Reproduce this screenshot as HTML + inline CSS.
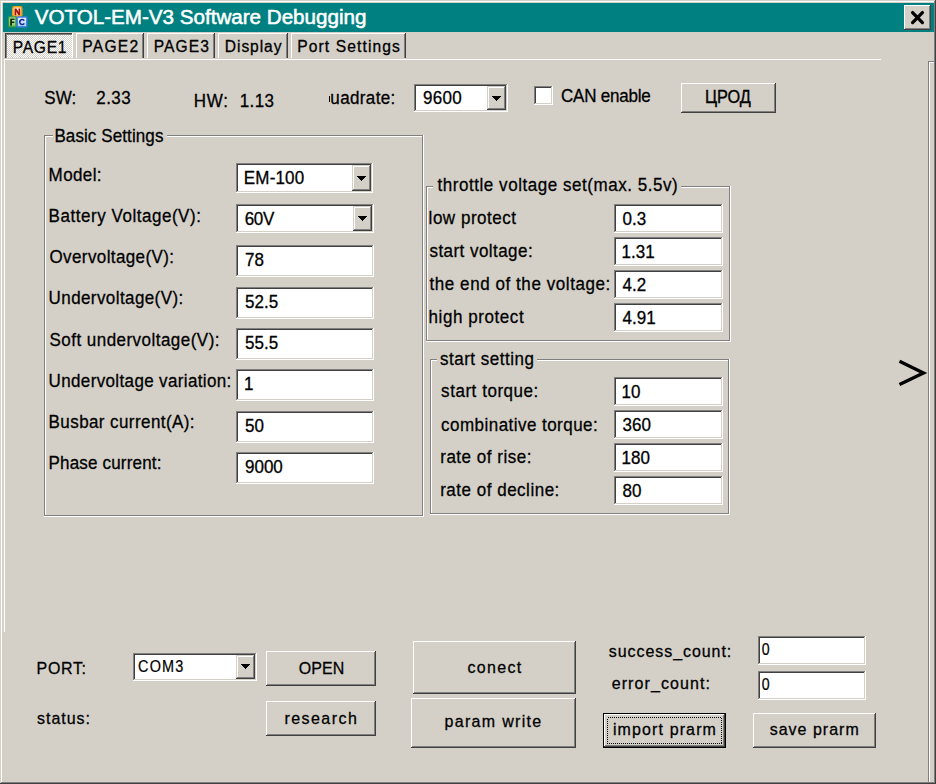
<!DOCTYPE html>
<html><head><meta charset="utf-8"><title>VOTOL-EM-V3 Software Debugging</title>
<style>html,body{margin:0;padding:0;background:#d4d0c8;overflow:hidden}svg{display:block}text{font-family:"Liberation Sans",sans-serif;white-space:pre}</style></head>
<body><svg width="936" height="784" viewBox="0 0 936 784">
<g shape-rendering="crispEdges"><rect x="0" y="0" width="936" height="784" fill="#d4d0c8"/><rect x="1" y="1" width="933" height="1" fill="#ffffff"/><rect x="1" y="1" width="1" height="781" fill="#ffffff"/><rect x="935" y="0" width="1" height="784" fill="#404040"/><rect x="934" y="1" width="1" height="782" fill="#808080"/><rect x="0" y="783" width="936" height="1" fill="#404040"/><rect x="1" y="782" width="934" height="1" fill="#808080"/><rect x="3" y="3" width="931" height="29" fill="#008080"/><defs><linearGradient id="gN" x1="0" y1="0" x2="0" y2="1"><stop offset="0" stop-color="#fff4e0"/><stop offset="1" stop-color="#f6c27a"/></linearGradient><linearGradient id="gF" x1="0" y1="0" x2="0" y2="1"><stop offset="0" stop-color="#e0f4c8"/><stop offset="1" stop-color="#7cc05a"/></linearGradient><linearGradient id="gC" x1="0" y1="0" x2="0" y2="1"><stop offset="0" stop-color="#eef4ff"/><stop offset="1" stop-color="#a8c8f4"/></linearGradient></defs><g shape-rendering="geometricPrecision"><rect x="12.8" y="6.8" width="9" height="9.6" rx="1.6" fill="url(#gN)" stroke="#f39c12" stroke-width="1.6"/><rect x="8.6" y="16.8" width="7.4" height="10" rx="0.6" fill="url(#gF)" stroke="#2f9a3a" stroke-width="1.3"/><rect x="17.2" y="17" width="9.6" height="9.8" rx="0.6" fill="url(#gC)" stroke="#3c7ee6" stroke-width="1.3"/><path d="M14.6 15.2V8.4h1.7l2.3 3.7V8.4h1.6v6.8h-1.6l-2.4-3.8v3.8z" fill="#a81010"/><path d="M10.2 25.8v-7.4h4.4v1.5h-2.7v1.6h2.4v1.4h-2.4v2.9z" fill="#0c2a0c"/><path d="M24.9 20.3a3.2 3.2 0 1 0 0 3.4l-1.3-.7a1.7 1.7 0 1 1 0-2z" fill="#102c90"/></g><rect x="904" y="5" width="27" height="25" fill="#d4d0c8"/><rect x="904" y="5" width="26" height="1" fill="#ffffff"/><rect x="904" y="5" width="1" height="24" fill="#ffffff"/><rect x="904" y="29" width="27" height="1" fill="#404040"/><rect x="930" y="5" width="1" height="25" fill="#404040"/><rect x="905" y="28" width="25" height="1" fill="#808080"/><rect x="929" y="6" width="1" height="23" fill="#808080"/><path d="M912.6 12.6L922.4 22.6M922.4 12.6L912.6 22.6" stroke="#000" stroke-width="3.3" stroke-linecap="round" fill="none" shape-rendering="geometricPrecision"/><defs><pattern id="dith" width="2" height="2" patternUnits="userSpaceOnUse"><rect width="2" height="2" fill="#d4d0c8"/><rect width="1" height="1" fill="#fff"/><rect x="1" y="1" width="1" height="1" fill="#fff"/></pattern></defs><rect x="5" y="33" width="68" height="25" fill="url(#dith)"/><rect x="5" y="33" width="67" height="1" fill="#404040"/><rect x="5" y="33" width="1" height="25" fill="#404040"/><rect x="6" y="34" width="66" height="1" fill="#808080"/><rect x="6" y="34" width="1" height="24" fill="#808080"/><rect x="72" y="33" width="1" height="25" fill="#ffffff"/><rect x="76" y="33" width="68" height="25" fill="#d4d0c8"/><rect x="76" y="33" width="67" height="1" fill="#ffffff"/><rect x="76" y="33" width="1" height="25" fill="#ffffff"/><rect x="143" y="33" width="1" height="25" fill="#404040"/><rect x="142" y="34" width="1" height="24" fill="#808080"/><rect x="147" y="33" width="68" height="25" fill="#d4d0c8"/><rect x="147" y="33" width="67" height="1" fill="#ffffff"/><rect x="147" y="33" width="1" height="25" fill="#ffffff"/><rect x="214" y="33" width="1" height="25" fill="#404040"/><rect x="213" y="34" width="1" height="24" fill="#808080"/><rect x="218" y="33" width="70" height="25" fill="#d4d0c8"/><rect x="218" y="33" width="69" height="1" fill="#ffffff"/><rect x="218" y="33" width="1" height="25" fill="#ffffff"/><rect x="287" y="33" width="1" height="25" fill="#404040"/><rect x="286" y="34" width="1" height="24" fill="#808080"/><rect x="291" y="33" width="115" height="25" fill="#d4d0c8"/><rect x="291" y="33" width="114" height="1" fill="#ffffff"/><rect x="291" y="33" width="1" height="25" fill="#ffffff"/><rect x="405" y="33" width="1" height="25" fill="#404040"/><rect x="404" y="34" width="1" height="24" fill="#808080"/><rect x="4" y="59" width="877" height="1" fill="#ffffff"/><rect x="4" y="59" width="1" height="573" fill="#ffffff"/><rect x="329" y="96" width="1.4" height="6" fill="#000"/><rect x="414" y="84" width="94" height="28" fill="#ffffff"/><rect x="414" y="84" width="93" height="1" fill="#808080"/><rect x="414" y="84" width="1" height="27" fill="#808080"/><rect x="415" y="85" width="91" height="1" fill="#404040"/><rect x="415" y="85" width="1" height="25" fill="#404040"/><rect x="414" y="111" width="94" height="1" fill="#ffffff"/><rect x="507" y="84" width="1" height="28" fill="#ffffff"/><rect x="415" y="110" width="92" height="1" fill="#d4d0c8"/><rect x="506" y="85" width="1" height="26" fill="#d4d0c8"/><rect x="487" y="86" width="19" height="24" fill="#d4d0c8"/><rect x="487" y="86" width="18" height="1" fill="#d4d0c8"/><rect x="487" y="86" width="1" height="23" fill="#d4d0c8"/><rect x="488" y="87" width="16" height="1" fill="#ffffff"/><rect x="488" y="87" width="1" height="21" fill="#ffffff"/><rect x="487" y="109" width="19" height="1" fill="#404040"/><rect x="505" y="86" width="1" height="24" fill="#404040"/><rect x="488" y="108" width="17" height="1" fill="#808080"/><rect x="504" y="87" width="1" height="22" fill="#808080"/><rect x="492" y="96" width="9" height="1" fill="#000"/><rect x="493" y="97" width="7" height="1" fill="#000"/><rect x="494" y="98" width="5" height="1" fill="#000"/><rect x="495" y="99" width="3" height="1" fill="#000"/><rect x="496" y="100" width="1" height="1" fill="#000"/><rect x="534" y="86" width="19" height="19" fill="#ffffff"/><rect x="534" y="86" width="18" height="1" fill="#808080"/><rect x="534" y="86" width="1" height="18" fill="#808080"/><rect x="535" y="87" width="16" height="1" fill="#404040"/><rect x="535" y="87" width="1" height="16" fill="#404040"/><rect x="534" y="104" width="19" height="1" fill="#ffffff"/><rect x="552" y="86" width="1" height="19" fill="#ffffff"/><rect x="535" y="103" width="17" height="1" fill="#d4d0c8"/><rect x="551" y="87" width="1" height="17" fill="#d4d0c8"/><rect x="681" y="83" width="95" height="30" fill="#d4d0c8"/><rect x="681" y="83" width="94" height="1" fill="#ffffff"/><rect x="681" y="83" width="1" height="29" fill="#ffffff"/><rect x="681" y="112" width="95" height="1" fill="#404040"/><rect x="775" y="83" width="1" height="30" fill="#404040"/><rect x="682" y="111" width="93" height="1" fill="#808080"/><rect x="774" y="84" width="1" height="28" fill="#808080"/><rect x="44" y="135" width="9" height="1" fill="#808080"/><rect x="45" y="136" width="8" height="1" fill="#ffffff"/><rect x="167" y="135" width="256" height="1" fill="#808080"/><rect x="167" y="136" width="256" height="1" fill="#ffffff"/><rect x="44" y="135" width="1" height="381" fill="#808080"/><rect x="45" y="136" width="1" height="379" fill="#ffffff"/><rect x="44" y="515" width="379" height="1" fill="#808080"/><rect x="44" y="516" width="380" height="1" fill="#ffffff"/><rect x="422" y="135" width="1" height="381" fill="#808080"/><rect x="423" y="135" width="1" height="382" fill="#ffffff"/><rect x="236" y="163" width="137" height="30" fill="#ffffff"/><rect x="236" y="163" width="136" height="1" fill="#808080"/><rect x="236" y="163" width="1" height="29" fill="#808080"/><rect x="237" y="164" width="134" height="1" fill="#404040"/><rect x="237" y="164" width="1" height="27" fill="#404040"/><rect x="236" y="192" width="137" height="1" fill="#ffffff"/><rect x="372" y="163" width="1" height="30" fill="#ffffff"/><rect x="237" y="191" width="135" height="1" fill="#d4d0c8"/><rect x="371" y="164" width="1" height="28" fill="#d4d0c8"/><rect x="352" y="165" width="19" height="26" fill="#d4d0c8"/><rect x="352" y="165" width="18" height="1" fill="#d4d0c8"/><rect x="352" y="165" width="1" height="25" fill="#d4d0c8"/><rect x="353" y="166" width="16" height="1" fill="#ffffff"/><rect x="353" y="166" width="1" height="23" fill="#ffffff"/><rect x="352" y="190" width="19" height="1" fill="#404040"/><rect x="370" y="165" width="1" height="26" fill="#404040"/><rect x="353" y="189" width="17" height="1" fill="#808080"/><rect x="369" y="166" width="1" height="24" fill="#808080"/><rect x="357" y="176" width="9" height="1" fill="#000"/><rect x="358" y="177" width="7" height="1" fill="#000"/><rect x="359" y="178" width="5" height="1" fill="#000"/><rect x="360" y="179" width="3" height="1" fill="#000"/><rect x="361" y="180" width="1" height="1" fill="#000"/><rect x="236" y="204" width="138" height="29" fill="#ffffff"/><rect x="236" y="204" width="137" height="1" fill="#808080"/><rect x="236" y="204" width="1" height="28" fill="#808080"/><rect x="237" y="205" width="135" height="1" fill="#404040"/><rect x="237" y="205" width="1" height="26" fill="#404040"/><rect x="236" y="232" width="138" height="1" fill="#ffffff"/><rect x="373" y="204" width="1" height="29" fill="#ffffff"/><rect x="237" y="231" width="136" height="1" fill="#d4d0c8"/><rect x="372" y="205" width="1" height="27" fill="#d4d0c8"/><rect x="353" y="206" width="19" height="25" fill="#d4d0c8"/><rect x="353" y="206" width="18" height="1" fill="#d4d0c8"/><rect x="353" y="206" width="1" height="24" fill="#d4d0c8"/><rect x="354" y="207" width="16" height="1" fill="#ffffff"/><rect x="354" y="207" width="1" height="22" fill="#ffffff"/><rect x="353" y="230" width="19" height="1" fill="#404040"/><rect x="371" y="206" width="1" height="25" fill="#404040"/><rect x="354" y="229" width="17" height="1" fill="#808080"/><rect x="370" y="207" width="1" height="23" fill="#808080"/><rect x="358" y="216" width="9" height="1" fill="#000"/><rect x="359" y="217" width="7" height="1" fill="#000"/><rect x="360" y="218" width="5" height="1" fill="#000"/><rect x="361" y="219" width="3" height="1" fill="#000"/><rect x="362" y="220" width="1" height="1" fill="#000"/><rect x="236" y="245" width="138" height="32" fill="#ffffff"/><rect x="236" y="245" width="137" height="1" fill="#808080"/><rect x="236" y="245" width="1" height="31" fill="#808080"/><rect x="237" y="246" width="135" height="1" fill="#404040"/><rect x="237" y="246" width="1" height="29" fill="#404040"/><rect x="236" y="276" width="138" height="1" fill="#ffffff"/><rect x="373" y="245" width="1" height="32" fill="#ffffff"/><rect x="237" y="275" width="136" height="1" fill="#d4d0c8"/><rect x="372" y="246" width="1" height="30" fill="#d4d0c8"/><rect x="236" y="287" width="138" height="32" fill="#ffffff"/><rect x="236" y="287" width="137" height="1" fill="#808080"/><rect x="236" y="287" width="1" height="31" fill="#808080"/><rect x="237" y="288" width="135" height="1" fill="#404040"/><rect x="237" y="288" width="1" height="29" fill="#404040"/><rect x="236" y="318" width="138" height="1" fill="#ffffff"/><rect x="373" y="287" width="1" height="32" fill="#ffffff"/><rect x="237" y="317" width="136" height="1" fill="#d4d0c8"/><rect x="372" y="288" width="1" height="30" fill="#d4d0c8"/><rect x="236" y="328" width="138" height="32" fill="#ffffff"/><rect x="236" y="328" width="137" height="1" fill="#808080"/><rect x="236" y="328" width="1" height="31" fill="#808080"/><rect x="237" y="329" width="135" height="1" fill="#404040"/><rect x="237" y="329" width="1" height="29" fill="#404040"/><rect x="236" y="359" width="138" height="1" fill="#ffffff"/><rect x="373" y="328" width="1" height="32" fill="#ffffff"/><rect x="237" y="358" width="136" height="1" fill="#d4d0c8"/><rect x="372" y="329" width="1" height="30" fill="#d4d0c8"/><rect x="236" y="369" width="138" height="32" fill="#ffffff"/><rect x="236" y="369" width="137" height="1" fill="#808080"/><rect x="236" y="369" width="1" height="31" fill="#808080"/><rect x="237" y="370" width="135" height="1" fill="#404040"/><rect x="237" y="370" width="1" height="29" fill="#404040"/><rect x="236" y="400" width="138" height="1" fill="#ffffff"/><rect x="373" y="369" width="1" height="32" fill="#ffffff"/><rect x="237" y="399" width="136" height="1" fill="#d4d0c8"/><rect x="372" y="370" width="1" height="30" fill="#d4d0c8"/><rect x="236" y="411" width="138" height="32" fill="#ffffff"/><rect x="236" y="411" width="137" height="1" fill="#808080"/><rect x="236" y="411" width="1" height="31" fill="#808080"/><rect x="237" y="412" width="135" height="1" fill="#404040"/><rect x="237" y="412" width="1" height="29" fill="#404040"/><rect x="236" y="442" width="138" height="1" fill="#ffffff"/><rect x="373" y="411" width="1" height="32" fill="#ffffff"/><rect x="237" y="441" width="136" height="1" fill="#d4d0c8"/><rect x="372" y="412" width="1" height="30" fill="#d4d0c8"/><rect x="236" y="452" width="138" height="32" fill="#ffffff"/><rect x="236" y="452" width="137" height="1" fill="#808080"/><rect x="236" y="452" width="1" height="31" fill="#808080"/><rect x="237" y="453" width="135" height="1" fill="#404040"/><rect x="237" y="453" width="1" height="29" fill="#404040"/><rect x="236" y="483" width="138" height="1" fill="#ffffff"/><rect x="373" y="452" width="1" height="32" fill="#ffffff"/><rect x="237" y="482" width="136" height="1" fill="#d4d0c8"/><rect x="372" y="453" width="1" height="30" fill="#d4d0c8"/><rect x="426" y="186" width="7" height="1" fill="#808080"/><rect x="427" y="187" width="6" height="1" fill="#ffffff"/><rect x="681" y="186" width="49" height="1" fill="#808080"/><rect x="681" y="187" width="49" height="1" fill="#ffffff"/><rect x="426" y="186" width="1" height="155" fill="#808080"/><rect x="427" y="187" width="1" height="153" fill="#ffffff"/><rect x="426" y="340" width="304" height="1" fill="#808080"/><rect x="426" y="341" width="305" height="1" fill="#ffffff"/><rect x="729" y="186" width="1" height="155" fill="#808080"/><rect x="730" y="186" width="1" height="156" fill="#ffffff"/><rect x="614" y="204" width="109" height="29" fill="#ffffff"/><rect x="614" y="204" width="108" height="1" fill="#808080"/><rect x="614" y="204" width="1" height="28" fill="#808080"/><rect x="615" y="205" width="106" height="1" fill="#404040"/><rect x="615" y="205" width="1" height="26" fill="#404040"/><rect x="614" y="232" width="109" height="1" fill="#ffffff"/><rect x="722" y="204" width="1" height="29" fill="#ffffff"/><rect x="615" y="231" width="107" height="1" fill="#d4d0c8"/><rect x="721" y="205" width="1" height="27" fill="#d4d0c8"/><rect x="614" y="237" width="109" height="29" fill="#ffffff"/><rect x="614" y="237" width="108" height="1" fill="#808080"/><rect x="614" y="237" width="1" height="28" fill="#808080"/><rect x="615" y="238" width="106" height="1" fill="#404040"/><rect x="615" y="238" width="1" height="26" fill="#404040"/><rect x="614" y="265" width="109" height="1" fill="#ffffff"/><rect x="722" y="237" width="1" height="29" fill="#ffffff"/><rect x="615" y="264" width="107" height="1" fill="#d4d0c8"/><rect x="721" y="238" width="1" height="27" fill="#d4d0c8"/><rect x="614" y="270" width="109" height="29" fill="#ffffff"/><rect x="614" y="270" width="108" height="1" fill="#808080"/><rect x="614" y="270" width="1" height="28" fill="#808080"/><rect x="615" y="271" width="106" height="1" fill="#404040"/><rect x="615" y="271" width="1" height="26" fill="#404040"/><rect x="614" y="298" width="109" height="1" fill="#ffffff"/><rect x="722" y="270" width="1" height="29" fill="#ffffff"/><rect x="615" y="297" width="107" height="1" fill="#d4d0c8"/><rect x="721" y="271" width="1" height="27" fill="#d4d0c8"/><rect x="614" y="303" width="109" height="29" fill="#ffffff"/><rect x="614" y="303" width="108" height="1" fill="#808080"/><rect x="614" y="303" width="1" height="28" fill="#808080"/><rect x="615" y="304" width="106" height="1" fill="#404040"/><rect x="615" y="304" width="1" height="26" fill="#404040"/><rect x="614" y="331" width="109" height="1" fill="#ffffff"/><rect x="722" y="303" width="1" height="29" fill="#ffffff"/><rect x="615" y="330" width="107" height="1" fill="#d4d0c8"/><rect x="721" y="304" width="1" height="27" fill="#d4d0c8"/><rect x="430" y="359" width="7" height="1" fill="#808080"/><rect x="431" y="360" width="6" height="1" fill="#ffffff"/><rect x="537" y="359" width="192" height="1" fill="#808080"/><rect x="537" y="360" width="192" height="1" fill="#ffffff"/><rect x="430" y="359" width="1" height="155" fill="#808080"/><rect x="431" y="360" width="1" height="153" fill="#ffffff"/><rect x="430" y="513" width="299" height="1" fill="#808080"/><rect x="430" y="514" width="300" height="1" fill="#ffffff"/><rect x="728" y="359" width="1" height="155" fill="#808080"/><rect x="729" y="359" width="1" height="156" fill="#ffffff"/><rect x="614" y="377" width="109" height="29" fill="#ffffff"/><rect x="614" y="377" width="108" height="1" fill="#808080"/><rect x="614" y="377" width="1" height="28" fill="#808080"/><rect x="615" y="378" width="106" height="1" fill="#404040"/><rect x="615" y="378" width="1" height="26" fill="#404040"/><rect x="614" y="405" width="109" height="1" fill="#ffffff"/><rect x="722" y="377" width="1" height="29" fill="#ffffff"/><rect x="615" y="404" width="107" height="1" fill="#d4d0c8"/><rect x="721" y="378" width="1" height="27" fill="#d4d0c8"/><rect x="614" y="410" width="109" height="29" fill="#ffffff"/><rect x="614" y="410" width="108" height="1" fill="#808080"/><rect x="614" y="410" width="1" height="28" fill="#808080"/><rect x="615" y="411" width="106" height="1" fill="#404040"/><rect x="615" y="411" width="1" height="26" fill="#404040"/><rect x="614" y="438" width="109" height="1" fill="#ffffff"/><rect x="722" y="410" width="1" height="29" fill="#ffffff"/><rect x="615" y="437" width="107" height="1" fill="#d4d0c8"/><rect x="721" y="411" width="1" height="27" fill="#d4d0c8"/><rect x="614" y="443" width="109" height="29" fill="#ffffff"/><rect x="614" y="443" width="108" height="1" fill="#808080"/><rect x="614" y="443" width="1" height="28" fill="#808080"/><rect x="615" y="444" width="106" height="1" fill="#404040"/><rect x="615" y="444" width="1" height="26" fill="#404040"/><rect x="614" y="471" width="109" height="1" fill="#ffffff"/><rect x="722" y="443" width="1" height="29" fill="#ffffff"/><rect x="615" y="470" width="107" height="1" fill="#d4d0c8"/><rect x="721" y="444" width="1" height="27" fill="#d4d0c8"/><rect x="614" y="476" width="109" height="29" fill="#ffffff"/><rect x="614" y="476" width="108" height="1" fill="#808080"/><rect x="614" y="476" width="1" height="28" fill="#808080"/><rect x="615" y="477" width="106" height="1" fill="#404040"/><rect x="615" y="477" width="1" height="26" fill="#404040"/><rect x="614" y="504" width="109" height="1" fill="#ffffff"/><rect x="722" y="476" width="1" height="29" fill="#ffffff"/><rect x="615" y="503" width="107" height="1" fill="#d4d0c8"/><rect x="721" y="477" width="1" height="27" fill="#d4d0c8"/><path d="M899.5 361.2L923.5 372.9L899.5 384.6" stroke="#000" stroke-width="3.3" fill="none" stroke-linejoin="miter" shape-rendering="geometricPrecision"/><rect x="928" y="61" width="1" height="721" fill="#808080"/><rect x="929" y="62" width="1" height="720" fill="#ffffff"/><rect x="928" y="61" width="6" height="1" fill="#808080"/><rect x="929" y="62" width="5" height="1" fill="#ffffff"/><rect x="133" y="653" width="124" height="28" fill="#ffffff"/><rect x="133" y="653" width="123" height="1" fill="#808080"/><rect x="133" y="653" width="1" height="27" fill="#808080"/><rect x="134" y="654" width="121" height="1" fill="#404040"/><rect x="134" y="654" width="1" height="25" fill="#404040"/><rect x="133" y="680" width="124" height="1" fill="#ffffff"/><rect x="256" y="653" width="1" height="28" fill="#ffffff"/><rect x="134" y="679" width="122" height="1" fill="#d4d0c8"/><rect x="255" y="654" width="1" height="26" fill="#d4d0c8"/><rect x="236" y="655" width="19" height="24" fill="#d4d0c8"/><rect x="236" y="655" width="18" height="1" fill="#d4d0c8"/><rect x="236" y="655" width="1" height="23" fill="#d4d0c8"/><rect x="237" y="656" width="16" height="1" fill="#ffffff"/><rect x="237" y="656" width="1" height="21" fill="#ffffff"/><rect x="236" y="678" width="19" height="1" fill="#404040"/><rect x="254" y="655" width="1" height="24" fill="#404040"/><rect x="237" y="677" width="17" height="1" fill="#808080"/><rect x="253" y="656" width="1" height="22" fill="#808080"/><rect x="241" y="664" width="9" height="1" fill="#000"/><rect x="242" y="665" width="7" height="1" fill="#000"/><rect x="243" y="666" width="5" height="1" fill="#000"/><rect x="244" y="667" width="3" height="1" fill="#000"/><rect x="245" y="668" width="1" height="1" fill="#000"/><rect x="266" y="651" width="110" height="35" fill="#d4d0c8"/><rect x="266" y="651" width="109" height="1" fill="#ffffff"/><rect x="266" y="651" width="1" height="34" fill="#ffffff"/><rect x="266" y="685" width="110" height="1" fill="#404040"/><rect x="375" y="651" width="1" height="35" fill="#404040"/><rect x="267" y="684" width="108" height="1" fill="#808080"/><rect x="374" y="652" width="1" height="33" fill="#808080"/><rect x="266" y="701" width="110" height="35" fill="#d4d0c8"/><rect x="266" y="701" width="109" height="1" fill="#ffffff"/><rect x="266" y="701" width="1" height="34" fill="#ffffff"/><rect x="266" y="735" width="110" height="1" fill="#404040"/><rect x="375" y="701" width="1" height="35" fill="#404040"/><rect x="267" y="734" width="108" height="1" fill="#808080"/><rect x="374" y="702" width="1" height="33" fill="#808080"/><rect x="413" y="641" width="163" height="53" fill="#d4d0c8"/><rect x="413" y="641" width="162" height="1" fill="#ffffff"/><rect x="413" y="641" width="1" height="52" fill="#ffffff"/><rect x="413" y="693" width="163" height="1" fill="#404040"/><rect x="575" y="641" width="1" height="53" fill="#404040"/><rect x="414" y="692" width="161" height="1" fill="#808080"/><rect x="574" y="642" width="1" height="51" fill="#808080"/><rect x="411" y="698" width="165" height="50" fill="#d4d0c8"/><rect x="411" y="698" width="164" height="1" fill="#ffffff"/><rect x="411" y="698" width="1" height="49" fill="#ffffff"/><rect x="411" y="747" width="165" height="1" fill="#404040"/><rect x="575" y="698" width="1" height="50" fill="#404040"/><rect x="412" y="746" width="163" height="1" fill="#808080"/><rect x="574" y="699" width="1" height="48" fill="#808080"/><rect x="758" y="636" width="108" height="29" fill="#ffffff"/><rect x="758" y="636" width="107" height="1" fill="#808080"/><rect x="758" y="636" width="1" height="28" fill="#808080"/><rect x="759" y="637" width="105" height="1" fill="#404040"/><rect x="759" y="637" width="1" height="26" fill="#404040"/><rect x="758" y="664" width="108" height="1" fill="#ffffff"/><rect x="865" y="636" width="1" height="29" fill="#ffffff"/><rect x="759" y="663" width="106" height="1" fill="#d4d0c8"/><rect x="864" y="637" width="1" height="27" fill="#d4d0c8"/><rect x="758" y="671" width="108" height="29" fill="#ffffff"/><rect x="758" y="671" width="107" height="1" fill="#808080"/><rect x="758" y="671" width="1" height="28" fill="#808080"/><rect x="759" y="672" width="105" height="1" fill="#404040"/><rect x="759" y="672" width="1" height="26" fill="#404040"/><rect x="758" y="699" width="108" height="1" fill="#ffffff"/><rect x="865" y="671" width="1" height="29" fill="#ffffff"/><rect x="759" y="698" width="106" height="1" fill="#d4d0c8"/><rect x="864" y="672" width="1" height="27" fill="#d4d0c8"/><rect x="603" y="713" width="123" height="35" fill="#000"/><rect x="604" y="714" width="121" height="33" fill="#d4d0c8"/><rect x="604" y="714" width="120" height="1" fill="#ffffff"/><rect x="604" y="714" width="1" height="32" fill="#ffffff"/><rect x="604" y="746" width="121" height="1" fill="#404040"/><rect x="724" y="714" width="1" height="33" fill="#404040"/><rect x="605" y="745" width="119" height="1" fill="#808080"/><rect x="723" y="715" width="1" height="31" fill="#808080"/><rect x="607.5" y="717.5" width="114" height="26" fill="none" stroke="#000" stroke-width="1" stroke-dasharray="1 1"/><rect x="753" y="713" width="123" height="35" fill="#d4d0c8"/><rect x="753" y="713" width="122" height="1" fill="#ffffff"/><rect x="753" y="713" width="1" height="34" fill="#ffffff"/><rect x="753" y="747" width="123" height="1" fill="#404040"/><rect x="875" y="713" width="1" height="35" fill="#404040"/><rect x="754" y="746" width="121" height="1" fill="#808080"/><rect x="874" y="714" width="1" height="33" fill="#808080"/></g>
<text transform="translate(34.70,23.50) scale(0.9819,1)" font-size="21.0" fill="#ffffff" font-weight="normal" stroke="#ffffff" stroke-width="0.560">VOTOL-EM-V3 Software Debugging</text><text transform="translate(12.70,52.50) scale(1.0000,1)" font-size="15.6" fill="#000" font-weight="normal" stroke="#000" stroke-width="0.300" letter-spacing="0.731">PAGE1</text><text transform="translate(82.30,51.70) scale(1.0000,1)" font-size="15.6" fill="#000" font-weight="normal" stroke="#000" stroke-width="0.300" letter-spacing="1.256">PAGE2</text><text transform="translate(153.70,51.70) scale(1.0000,1)" font-size="15.6" fill="#000" font-weight="normal" stroke="#000" stroke-width="0.300" letter-spacing="1.106">PAGE3</text><text transform="translate(224.80,51.70) scale(1.0000,1)" font-size="15.6" fill="#000" font-weight="normal" stroke="#000" stroke-width="0.300" letter-spacing="0.928">Display</text><text transform="translate(297.30,51.70) scale(1.0000,1)" font-size="15.6" fill="#000" font-weight="normal" stroke="#000" stroke-width="0.300" letter-spacing="1.102">Port Settings</text><text transform="translate(44.30,103.80) scale(0.9000,1)" font-size="18.9" fill="#000" font-weight="normal" stroke="#000" stroke-width="0.311" letter-spacing="0.123">SW:</text><text transform="translate(96.30,103.80) scale(0.9000,1)" font-size="18.9" fill="#000" font-weight="normal" stroke="#000" stroke-width="0.311" letter-spacing="0.469">2.33</text><text transform="translate(193.80,107.00) scale(0.9000,1)" font-size="18.9" fill="#000" font-weight="normal" stroke="#000" stroke-width="0.311" letter-spacing="0.768">HW:</text><text transform="translate(239.80,107.00) scale(0.9000,1)" font-size="18.9" fill="#000" font-weight="normal" stroke="#000" stroke-width="0.311" letter-spacing="0.395">1.13</text><text transform="translate(330.30,103.50) scale(0.9000,1)" font-size="18.9" fill="#000" font-weight="normal" stroke="#000" stroke-width="0.311" letter-spacing="0.419">uadrate:</text><text transform="translate(423.10,103.70) scale(0.9000,1)" font-size="18.9" fill="#000" font-weight="normal" stroke="#000" stroke-width="0.311" letter-spacing="0.309">9600</text><text transform="translate(561.00,101.80) scale(0.9000,1)" font-size="18.9" fill="#000" font-weight="normal" stroke="#000" stroke-width="0.311" letter-spacing="-0.249">CAN enable</text><text transform="translate(705.00,103.40) scale(0.8952,1)" font-size="18.2" fill="#000" font-weight="normal" stroke="#000" stroke-width="0.391">ЦРОД</text><text transform="translate(54.40,142.00) scale(0.9000,1)" font-size="18.9" fill="#000" font-weight="normal" stroke="#000" stroke-width="0.311" letter-spacing="0.109">Basic Settings</text><text transform="translate(48.60,181.00) scale(0.9000,1)" font-size="18.9" fill="#000" font-weight="normal" stroke="#000" stroke-width="0.311" letter-spacing="0.421">Model:</text><text transform="translate(48.60,222.10) scale(0.9000,1)" font-size="18.9" fill="#000" font-weight="normal" stroke="#000" stroke-width="0.311" letter-spacing="0.594">Battery Voltage(V):</text><text transform="translate(49.50,262.70) scale(0.9000,1)" font-size="18.9" fill="#000" font-weight="normal" stroke="#000" stroke-width="0.311" letter-spacing="0.434">Overvoltage(V):</text><text transform="translate(48.60,304.30) scale(0.9000,1)" font-size="18.9" fill="#000" font-weight="normal" stroke="#000" stroke-width="0.311" letter-spacing="0.452">Undervoltage(V):</text><text transform="translate(49.50,345.60) scale(0.9000,1)" font-size="18.9" fill="#000" font-weight="normal" stroke="#000" stroke-width="0.311" letter-spacing="0.520">Soft undervoltage(V):</text><text transform="translate(48.60,386.70) scale(0.9000,1)" font-size="18.9" fill="#000" font-weight="normal" stroke="#000" stroke-width="0.311" letter-spacing="0.398">Undervoltage variation:</text><text transform="translate(48.60,427.90) scale(0.9000,1)" font-size="18.9" fill="#000" font-weight="normal" stroke="#000" stroke-width="0.311" letter-spacing="0.460">Busbar current(A):</text><text transform="translate(48.60,468.90) scale(0.9000,1)" font-size="18.9" fill="#000" font-weight="normal" stroke="#000" stroke-width="0.311" letter-spacing="0.193">Phase current:</text><text transform="translate(243.80,183.70) scale(0.9000,1)" font-size="18.9" fill="#000" font-weight="normal" stroke="#000" stroke-width="0.311" letter-spacing="0.183">EM-100</text><text transform="translate(244.70,224.70) scale(0.9000,1)" font-size="18.9" fill="#000" font-weight="normal" stroke="#000" stroke-width="0.311" letter-spacing="-0.339">60V</text><text transform="translate(245.00,265.80) scale(0.9000,1)" font-size="18.9" fill="#000" font-weight="normal" stroke="#000" stroke-width="0.311">78</text><text transform="translate(245.00,307.80) scale(0.9000,1)" font-size="18.9" fill="#000" font-weight="normal" stroke="#000" stroke-width="0.311">52.5</text><text transform="translate(245.00,348.80) scale(0.9000,1)" font-size="18.9" fill="#000" font-weight="normal" stroke="#000" stroke-width="0.311">55.5</text><text transform="translate(244.10,389.80) scale(0.9000,1)" font-size="18.9" fill="#000" font-weight="normal" stroke="#000" stroke-width="0.311">1</text><text transform="translate(245.00,431.80) scale(0.9000,1)" font-size="18.9" fill="#000" font-weight="normal" stroke="#000" stroke-width="0.311">50</text><text transform="translate(245.00,472.80) scale(0.9000,1)" font-size="18.9" fill="#000" font-weight="normal" stroke="#000" stroke-width="0.311">9000</text><text transform="translate(437.50,191.20) scale(0.9000,1)" font-size="18.9" fill="#000" font-weight="normal" stroke="#000" stroke-width="0.311" letter-spacing="0.604">throttle voltage set(max. 5.5v)</text><text transform="translate(428.60,223.70) scale(0.9000,1)" font-size="18.9" fill="#000" font-weight="normal" stroke="#000" stroke-width="0.311" letter-spacing="0.579">low protect</text><text transform="translate(622.50,224.50) scale(0.9000,1)" font-size="18.9" fill="#000" font-weight="normal" stroke="#000" stroke-width="0.311">0.3</text><text transform="translate(429.50,257.20) scale(0.9000,1)" font-size="18.9" fill="#000" font-weight="normal" stroke="#000" stroke-width="0.311" letter-spacing="0.495">start voltage:</text><text transform="translate(621.60,257.50) scale(0.9000,1)" font-size="18.9" fill="#000" font-weight="normal" stroke="#000" stroke-width="0.311">1.31</text><text transform="translate(429.50,290.10) scale(0.9000,1)" font-size="18.9" fill="#000" font-weight="normal" stroke="#000" stroke-width="0.311" letter-spacing="0.630">the end of the voltage:</text><text transform="translate(622.50,290.50) scale(0.9000,1)" font-size="18.9" fill="#000" font-weight="normal" stroke="#000" stroke-width="0.311">4.2</text><text transform="translate(428.60,322.80) scale(0.9000,1)" font-size="18.9" fill="#000" font-weight="normal" stroke="#000" stroke-width="0.311" letter-spacing="0.624">high protect</text><text transform="translate(622.50,323.50) scale(0.9000,1)" font-size="18.9" fill="#000" font-weight="normal" stroke="#000" stroke-width="0.311">4.91</text><text transform="translate(440.00,364.90) scale(0.9000,1)" font-size="18.9" fill="#000" font-weight="normal" stroke="#000" stroke-width="0.311" letter-spacing="0.553">start setting</text><text transform="translate(441.10,397.00) scale(0.9000,1)" font-size="18.9" fill="#000" font-weight="normal" stroke="#000" stroke-width="0.311" letter-spacing="0.602">start torque:</text><text transform="translate(621.60,397.50) scale(0.9000,1)" font-size="18.9" fill="#000" font-weight="normal" stroke="#000" stroke-width="0.311">10</text><text transform="translate(441.10,430.50) scale(0.9000,1)" font-size="18.9" fill="#000" font-weight="normal" stroke="#000" stroke-width="0.311" letter-spacing="0.509">combinative torque:</text><text transform="translate(622.50,430.50) scale(0.9000,1)" font-size="18.9" fill="#000" font-weight="normal" stroke="#000" stroke-width="0.311">360</text><text transform="translate(440.20,463.00) scale(0.9000,1)" font-size="18.9" fill="#000" font-weight="normal" stroke="#000" stroke-width="0.311" letter-spacing="0.582">rate of rise:</text><text transform="translate(621.60,463.50) scale(0.9000,1)" font-size="18.9" fill="#000" font-weight="normal" stroke="#000" stroke-width="0.311">180</text><text transform="translate(440.20,496.10) scale(0.9000,1)" font-size="18.9" fill="#000" font-weight="normal" stroke="#000" stroke-width="0.311" letter-spacing="0.563">rate of decline:</text><text transform="translate(622.50,496.50) scale(0.9000,1)" font-size="18.9" fill="#000" font-weight="normal" stroke="#000" stroke-width="0.311">80</text><text transform="translate(36.58,674.20) scale(0.9200,1)" font-size="17.4" fill="#000" font-weight="normal" stroke="#000" stroke-width="0.304" letter-spacing="0.723">PORT:</text><text transform="translate(37.00,723.70) scale(0.9200,1)" font-size="17.4" fill="#000" font-weight="normal" stroke="#000" stroke-width="0.304" letter-spacing="1.057">status:</text><text transform="translate(138.00,672.00) scale(0.8500,1)" font-size="17.0" fill="#000" font-weight="normal" stroke="#000" stroke-width="0.235" letter-spacing="1.427">COM3</text><text transform="translate(298.70,674.20) scale(0.9200,1)" font-size="17.4" fill="#000" font-weight="normal" stroke="#000" stroke-width="0.304" letter-spacing="0.062">OPEN</text><text transform="translate(284.38,723.70) scale(0.9200,1)" font-size="17.4" fill="#000" font-weight="normal" stroke="#000" stroke-width="0.304" letter-spacing="1.598">research</text><text transform="translate(467.50,672.90) scale(0.9200,1)" font-size="17.4" fill="#000" font-weight="normal" stroke="#000" stroke-width="0.304" letter-spacing="1.414">conect</text><text transform="translate(444.48,727.30) scale(0.9200,1)" font-size="17.4" fill="#000" font-weight="normal" stroke="#000" stroke-width="0.304" letter-spacing="1.431">param write</text><text transform="translate(608.80,656.70) scale(0.9200,1)" font-size="17.4" fill="#000" font-weight="normal" stroke="#000" stroke-width="0.304" letter-spacing="1.019">success_count:</text><text transform="translate(611.70,688.70) scale(0.9200,1)" font-size="17.4" fill="#000" font-weight="normal" stroke="#000" stroke-width="0.304" letter-spacing="1.196">error_count:</text><text transform="translate(761.70,654.50) scale(0.8333,1)" font-size="17.0" fill="#000" font-weight="normal" stroke="#000" stroke-width="0.240">0</text><text transform="translate(761.70,689.50) scale(0.8333,1)" font-size="17.0" fill="#000" font-weight="normal" stroke="#000" stroke-width="0.240">0</text><text transform="translate(612.88,735.30) scale(0.9200,1)" font-size="17.4" fill="#000" font-weight="normal" stroke="#000" stroke-width="0.304" letter-spacing="1.224">import prarm</text><text transform="translate(769.70,735.30) scale(0.9200,1)" font-size="17.4" fill="#000" font-weight="normal" stroke="#000" stroke-width="0.304" letter-spacing="1.090">save prarm</text>
</svg></body></html>
